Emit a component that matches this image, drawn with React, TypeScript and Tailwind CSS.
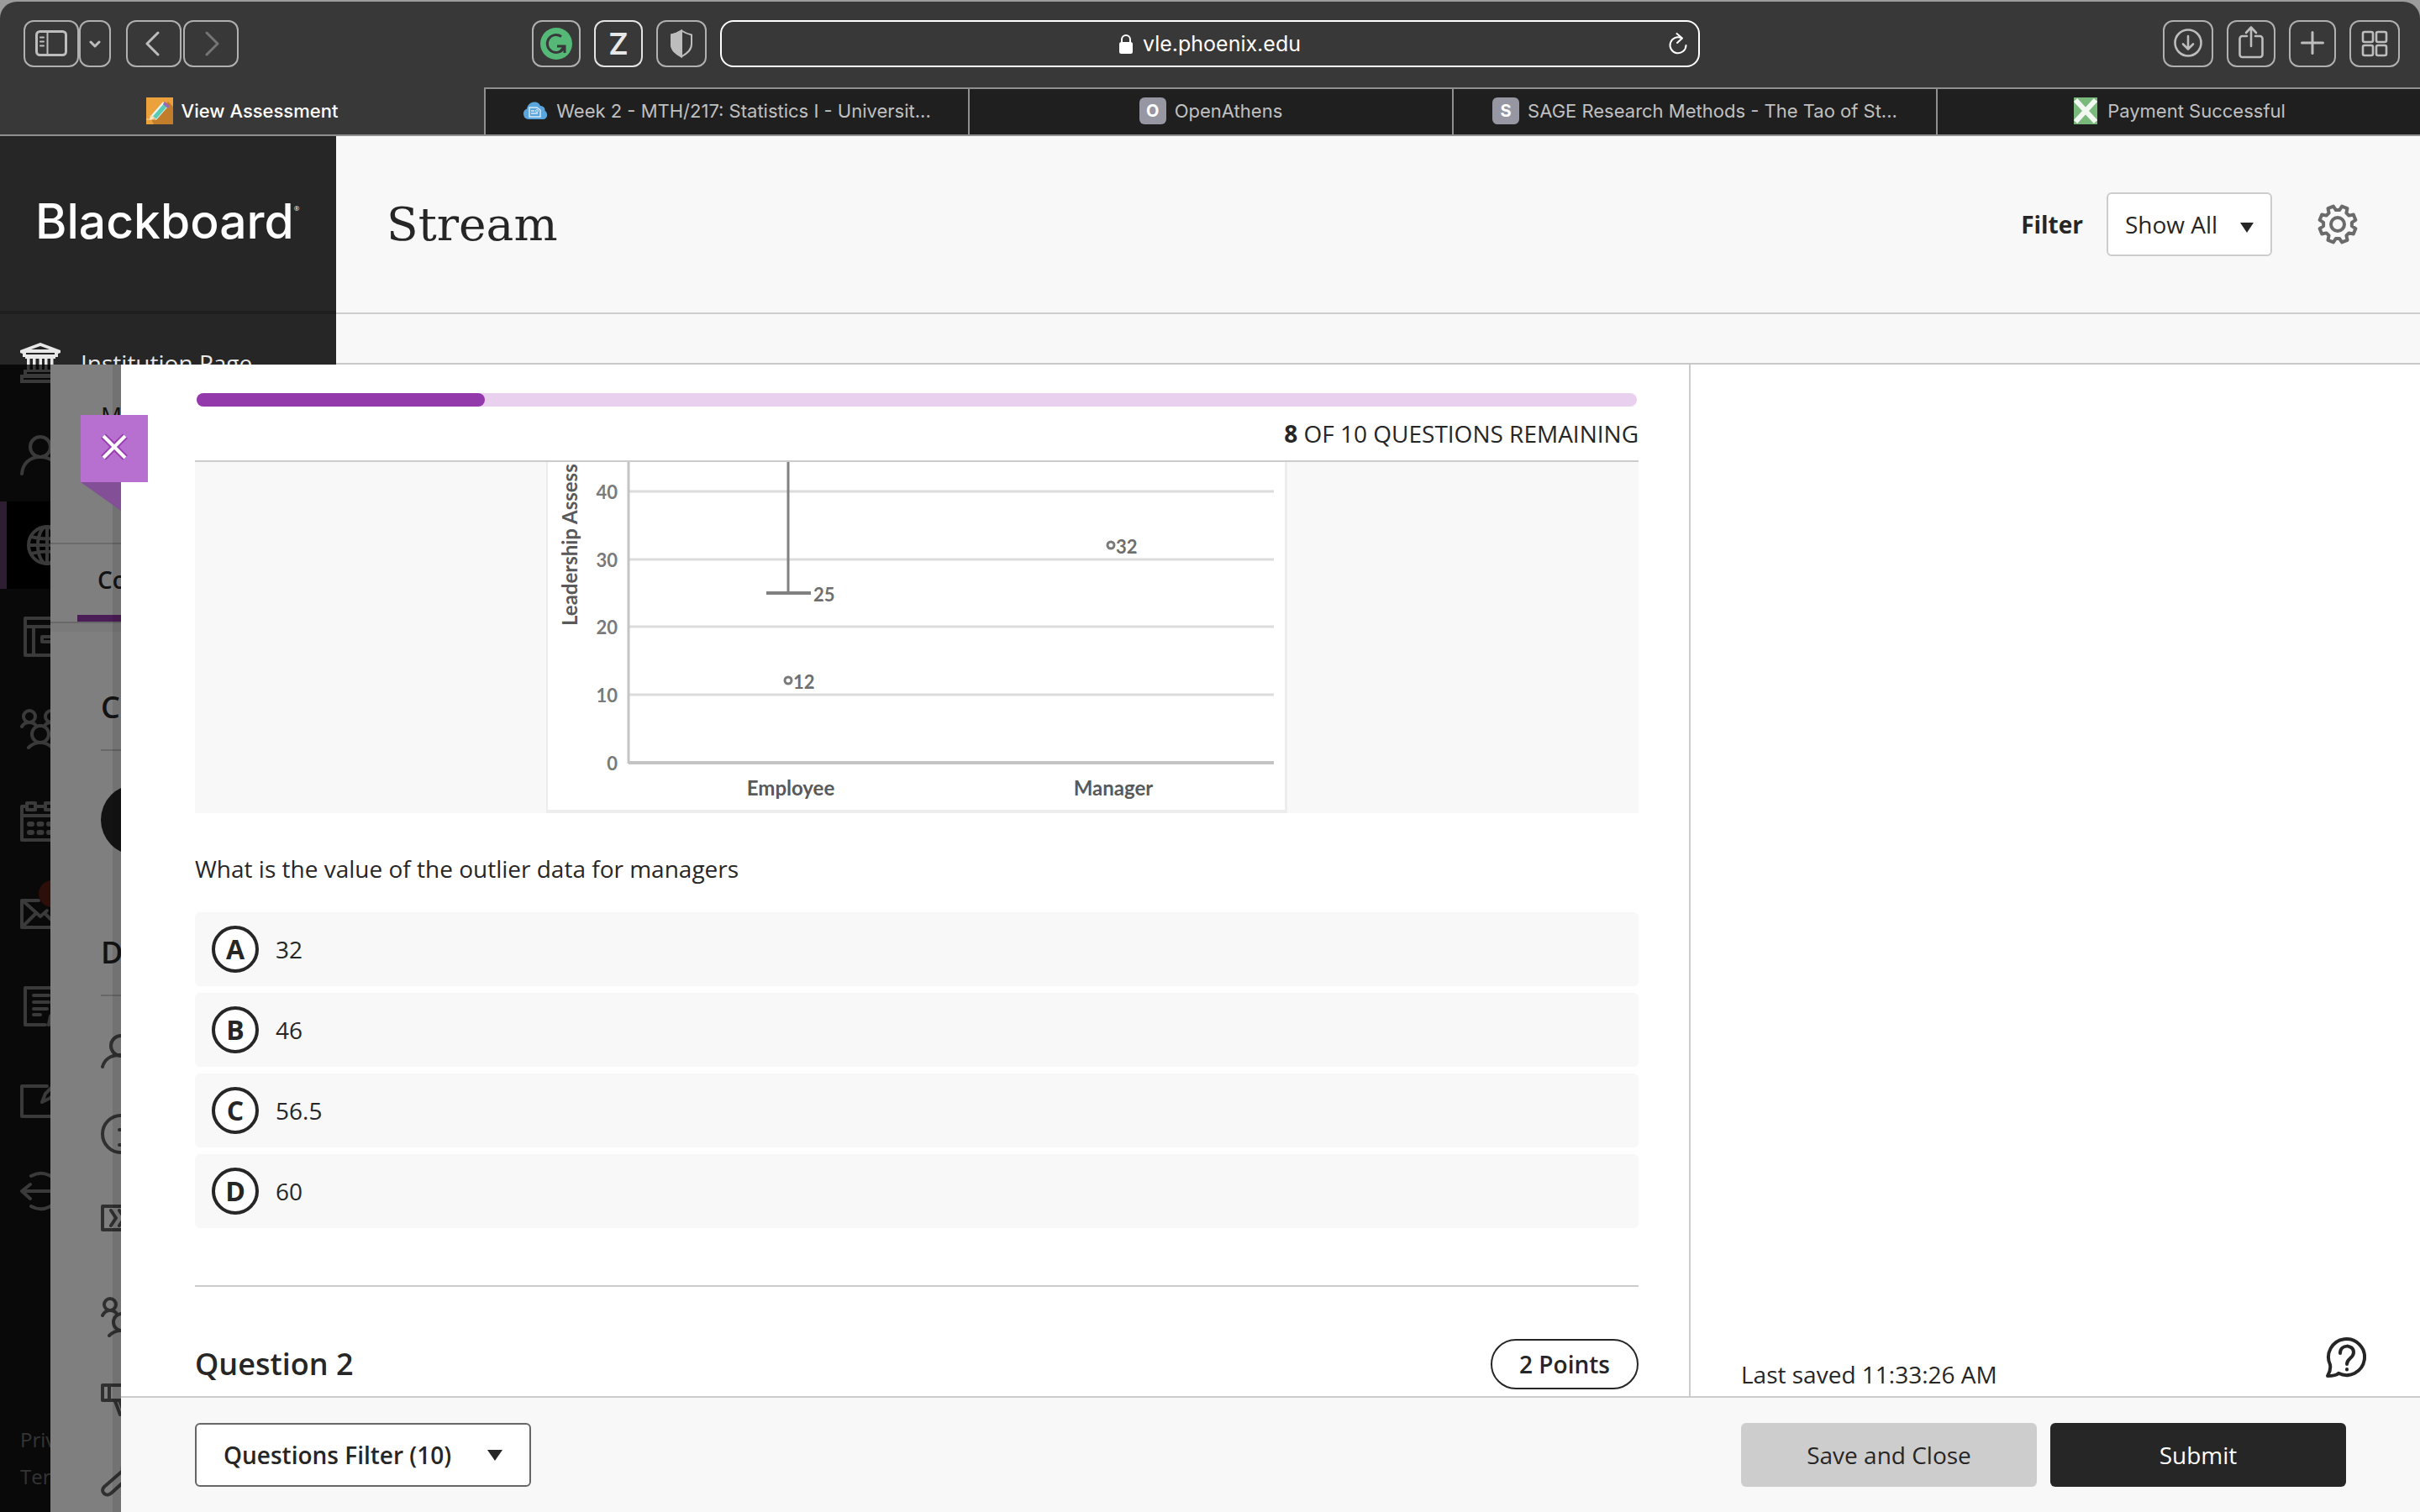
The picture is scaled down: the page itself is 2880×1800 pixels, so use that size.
import type { ReactNode } from "react";

const navIcon = "h-12 w-12 shrink-0 fill-none stroke-current stroke-[4]";

function Icon({ children, className = navIcon }: { children: ReactNode; className?: string }) {
  return (
    <svg viewBox="0 0 48 48" className={className} strokeLinecap="round" strokeLinejoin="round" aria-hidden="true">
      {children}
    </svg>
  );
}

/* ---------- browser chrome ---------- */

function ToolButton({ label, className, children }: { label: string; className: string; children: ReactNode }) {
  return (
    <button
      type="button"
      aria-label={label}
      className={`flex h-14 items-center justify-center rounded-xl border-2 text-[#bdbdbd] ${className}`}
    >
      {children}
    </button>
  );
}

function Toolbar() {
  return (
    <div className="flex h-[102px] items-start pt-[22px]">
      <div className="flex flex-1 items-center pr-4 pl-7">
        <ToolButton label="Sidebar" className="w-[66px] border-[#b0b0b0]">
          <svg viewBox="0 0 38 32" className="h-8 w-[38px] fill-none stroke-current stroke-3" strokeLinecap="round">
            <rect x="1.5" y="1.5" width="35" height="28" rx="4" />
            <path d="M14.5 2v28" strokeWidth="2" />
            <path d="M6 8.500h4M6 13.500h4M6 18.500h4" strokeWidth="2" />
          </svg>
        </ToolButton>
        <ToolButton label="Tab groups" className="w-[38px] border-[#b0b0b0]">
          <svg viewBox="0 0 14 9" className="h-[9px] w-3.5 fill-none stroke-current stroke-3" strokeLinecap="round" strokeLinejoin="round">
            <path d="M2 2l5 5 5-5" />
          </svg>
        </ToolButton>
        <ToolButton label="Back" className="ml-[18px] w-[66px] border-[#b0b0b0]">
          <svg viewBox="0 0 18 30" className="mr-1 h-[30px] w-[18px] fill-none stroke-current stroke-3" strokeLinecap="round" strokeLinejoin="round">
            <path d="M16 2L3 15l13 13" />
          </svg>
        </ToolButton>
        <ToolButton label="Forward" className="ml-0.5 w-[66px] border-[#b0b0b0]">
          <svg viewBox="0 0 18 30" className="ml-1 h-[30px] w-[18px] fill-none stroke-[#757575] stroke-3" strokeLinecap="round" strokeLinejoin="round">
            <path d="M2 2l13 13L2 28" />
          </svg>
        </ToolButton>
        <div className="ml-auto flex gap-4">
          <ToolButton label="Writing assistant" className="w-[58px] border-[#b0b0b0]">
            <svg viewBox="0 0 38 38" className="h-[38px] w-[38px] fill-none">
              <circle cx="19" cy="19" r="19" fill="#55b877" />
              <path d="M25 10.500A10.500 10.500 0 1 0 28 24" stroke="#38383a" strokeWidth="3" />
              <path d="M20 22h9v8M29 22l-5 6" stroke="#38383a" strokeWidth="3" />
            </svg>
          </ToolButton>
          <ToolButton label="Zotero" className="w-[58px] border-[#e4e4e4]">
            <span className="text-[36px] leading-10 font-semibold text-[#e8e8e8]">Z</span>
          </ToolButton>
          <ToolButton label="Privacy report" className="w-[60px] border-[#b0b0b0]">
            <svg viewBox="0 0 28 34" className="h-[34px] w-7 fill-none stroke-current stroke-2">
              <path d="M14 1.500c4 2.500 8 4 12 5v11c0 7-5 11-12 15-7-4-12-8-12-15v-11c4-1 8-2.500 12-5z" />
              <path d="M14 1.500v31c-7-4-12-8-12-15v-11c4-1 8-2.500 12-5z" className="fill-current" />
            </svg>
          </ToolButton>
        </div>
      </div>

      <div className="flex h-14 w-[1166px] items-center rounded-2xl border-2 border-white pr-3 pl-3 text-white">
        <div className="flex flex-1 items-center justify-center gap-3 pl-6">
          <svg viewBox="0 0 16 24" className="h-6 w-4">
            <rect y="10" width="16" height="14" rx="2.500" fill="currentColor" />
            <path d="M3 11V7a5 5 0 0 1 10 0v4" fill="none" stroke="currentColor" strokeWidth="2" />
          </svg>
          <input
            aria-label="Address"
            defaultValue="vle.phoenix.edu"
            className="field-sizing-content bg-transparent text-[25px] leading-8 outline-none"
          />
        </div>
        <button type="button" aria-label="Reload">
          <svg viewBox="0 0 24 28" className="h-7 w-6 fill-none stroke-current stroke-2" strokeLinecap="round" strokeLinejoin="round">
            <path d="M16 7.200A9.500 9.500 0 1 0 21.500 16" />
            <path d="M10.500 2l6.500 5.500-6 5.500" />
          </svg>
        </button>
      </div>

      <div className="flex flex-1 justify-end gap-4 pr-6 pl-5">
        <ToolButton label="Downloads" className="w-[60px] border-[#b0b0b0]">
          <svg viewBox="0 0 36 36" className="h-9 w-9 fill-none stroke-current" strokeWidth="2.600" strokeLinecap="round" strokeLinejoin="round">
            <circle cx="18" cy="17" r="15.500" />
            <path d="M18 9v15M12 18.500l6 6 6-6" />
          </svg>
        </ToolButton>
        <ToolButton label="Share" className="w-[58px] border-[#b0b0b0]">
          <svg viewBox="0 0 30 40" className="mb-1 h-10 w-[30px] fill-none stroke-current" strokeWidth="2.600" strokeLinecap="round" strokeLinejoin="round">
            <path d="M10 13H4.500A3 3 0 0 0 1.500 16v19a3 3 0 0 0 3 3h21a3 3 0 0 0 3-3V16a3 3 0 0 0-3-3H20" />
            <path d="M15 25V3M9 9l6-6.500L21 9" />
          </svg>
        </ToolButton>
        <ToolButton label="New tab" className="w-14 border-[#b0b0b0]">
          <svg viewBox="0 0 28 28" className="mb-0.5 h-7 w-7 fill-none stroke-current stroke-3" strokeLinecap="round">
            <path d="M14 1.500v25M1.500 14h25" />
          </svg>
        </ToolButton>
        <ToolButton label="Tab overview" className="w-[60px] border-[#b0b0b0]">
          <svg viewBox="0 0 32 32" className="h-8 w-8 fill-none stroke-current" strokeWidth="2.600">
            <rect x="2" y="2" width="12" height="12" rx="2" />
            <rect x="18" y="2" width="12" height="12" rx="2" />
            <rect x="2" y="18" width="12" height="12" rx="2" />
            <rect x="18" y="18" width="12" height="12" rx="2" />
          </svg>
        </ToolButton>
      </div>
    </div>
  );
}

function LetterBadge({ letter }: { letter: string }) {
  return (
    <span className="flex h-8 w-8 items-center justify-center rounded-md bg-[#9797a3] text-[20px] leading-8 font-bold text-white">
      {letter}
    </span>
  );
}

function TabBar() {
  const tabs = [
    {
      title: "Week 2 - MTH/217: Statistics I - Universit...",
      icon: (
        <svg viewBox="0 0 30 22" className="h-[22px] w-[30px]">
          <path d="M7 21a6.500 6.500 0 0 1-2-12.500C6 3 10 .5 14 .5c4 0 6 2 7 4.500 4 0 6 3 5.500 6 4 2 3.500 10-2 10z" fill="#5aa5dc" />
          <path d="M8 7h9l4 3v8H8z" fill="none" stroke="#d5eaf8" strokeWidth="1.500" />
          <path d="M10 11h4M10 14h8" stroke="#d5eaf8" strokeWidth="1.500" />
          <circle cx="17" cy="11" r="1.500" fill="none" stroke="#d5eaf8" />
        </svg>
      ),
    },
    { title: "OpenAthens", icon: <LetterBadge letter="O" /> },
    { title: "SAGE Research Methods - The Tao of St...", icon: <LetterBadge letter="S" /> },
    {
      title: "Payment Successful",
      icon: (
        <svg viewBox="0 0 32 32" className="h-8 w-8">
          <rect x="2" width="28" height="32" fill="#7ab97c" />
          <path d="M4 3l24 26M28 3L4 29" stroke="#f2f7f2" strokeWidth="6" />
        </svg>
      ),
    },
  ];
  return (
    <div className="grid h-14 grid-cols-5 text-[22px] leading-8">
      <button type="button" className="flex items-center justify-center gap-2.5 font-medium text-white">
        <svg viewBox="0 0 32 32" className="h-8 w-8">
          <rect width="32" height="32" fill="#eba13c" />
          <path d="M6 26L26 5l6 6v21H9z" fill="#c27d2b" />
          <path d="M0 26h12" stroke="#f8d9a6" strokeWidth="1" />
          <path d="M9 24L23 8" stroke="#eaf6f0" strokeWidth="8" />
          <path d="M10 24L23 9" stroke="#59cbb4" strokeWidth="5" />
          <path d="M22 5l6 5-2 3-6-5z" fill="#9b66b8" />
          <path d="M5 21l-1 6 6-2z" fill="#fbe7c0" />
        </svg>
        View Assessment
      </button>
      {tabs.map((tab) => (
        <button
          key={tab.title}
          type="button"
          className="flex items-center justify-center gap-2.5 border-t-2 border-l-2 border-[#8f8f8f] bg-[#1f1f1f] pb-0.5 whitespace-nowrap text-[#c0c0c0]"
        >
          {tab.icon}
          {tab.title}
        </button>
      ))}
    </div>
  );
}

/* ---------- icons shared by the side menus ---------- */

function BankIcon() {
  return (
    <svg viewBox="0 0 48 48" className="h-12 w-12 shrink-0" fill="currentColor" aria-hidden="true">
      <path fillRule="evenodd" d="M24 0l24 9v3l-3 1v4h-3v2H6v-2H3v-4l-3-1V9zM24 4L13 8h22zM7 12v2h34v-2z" />
      <path d="M8 18h3.500v14H8zM15 18h3.500v14H15zM22.500 18H26v14h-3.500zM29 18h3.500v14H29zM36 18h3.500v14H36z" />
      <path fillRule="evenodd" d="M6 32h36v6h6v10H0V38h4v-6zM8 35v2h32v-2zM4 42v2h40v-2z" />
    </svg>
  );
}

function PeopleIcon() {
  return (
    <Icon>
      <circle cx="11" cy="9" r="7" />
      <path d="M2 21c2-4 5-5 9-5 3 0 6 1 8 4" />
      <circle cx="37" cy="9" r="7" />
      <path d="M46 21c-2-4-5-5-9-5-3 0-6 1-8 4" />
      <circle cx="24" cy="30" r="10" />
      <path d="M10 46c4-4 9-6 14-6s10 2 14 6" />
    </Icon>
  );
}

function PersonIcon() {
  return (
    <Icon>
      <circle cx="24" cy="14" r="12" />
      <path d="M2 46c1-12 9-20 22-20s21 8 22 20" />
    </Icon>
  );
}

function Sidebar() {
  const row = "flex h-[110px] shrink-0 items-center gap-6 pl-6";
  return (
    <nav aria-label="Main" className="flex w-[400px] shrink-0 flex-col bg-[#262626] text-[#e8e8e8]">
      <div className="flex h-[212px] shrink-0 items-center border-b-4 border-[#1e1e1e] pb-1 pl-[42px]">
        <div className="flex items-start text-white">
          <span className="font-[Inter] text-[57px] leading-[64px] font-medium">Blackboard</span>
          <span className="pt-2 text-[8px] leading-4">®</span>
        </div>
      </div>
      <a href="#institution" className={`${row} mt-[3px] text-[28px] leading-10`}>
        <BankIcon />
        Institution Page
      </a>
      <a href="#profile" aria-label="Profile" className={row}>
        <PersonIcon />
      </a>
      <a href="#courses" aria-label="Courses" className="mb-0.5 flex h-[104px] shrink-0 items-center border-l-8 border-[#b878c8] bg-black pl-6">
        <Icon>
          <circle cx="24" cy="24" r="22" />
          <ellipse cx="24" cy="24" rx="11" ry="22" />
          <path d="M24 2v44M2 24h44M5 14q19 5 38 0M5 34q19-5 38 0" />
        </Icon>
      </a>
      <a href="#organizations" aria-label="Organizations" className={row}>
        <Icon>
          <path d="M6 2h38v44H6zM6 12h38M16 12v34M26 24h14v6H26z" />
        </Icon>
      </a>
      <a href="#groups" aria-label="Groups" className={row}>
        <PeopleIcon />
      </a>
      <a href="#calendar" aria-label="Calendar" className={row}>
        <Icon>
          <path d="M8 6H2v40h44V6h-6M19 6h10M2 17h44" />
          <rect x="8" y="2" width="10" height="8" />
          <rect x="30" y="2" width="10" height="8" />
          <path d="M11 27h3M22.500 27h3M34 27h3M11 37h3M22.500 37h3M34 37h3" strokeWidth="6" />
        </Icon>
      </a>
      <a href="#messages" aria-label="Messages" className={`${row} relative`}>
        <Icon>
          <path d="M22 8H2v32h44V18M4 9l20 18 8-7M4 38l15-15M44 38L29 23" />
        </Icon>
        <span className="absolute top-[15px] left-[46px] h-8 w-8 rounded-full bg-[#b83820]" />
      </a>
      <a href="#grades" aria-label="Grades" className={row}>
        <Icon>
          <path d="M30 46H6V2h38v22M16 11h18M16 19h18M16 27h16M16 34h8M34 46l2-10 8-10" />
        </Icon>
      </a>
      <a href="#tools" aria-label="Tools" className={row}>
        <Icon>
          <path d="M32 9H2v36h44V27M26 28l4-10L44 4l4 4-12 15-10 5z" />
        </Icon>
      </a>
      <a href="#signout" aria-label="Sign out" className={row}>
        <Icon>
          <path d="M13 6c14-8 33 0 33 18S27 50 13 42M35 24H2M12 16l-10 8 10 9" />
        </Icon>
      </a>
      <div className="mt-auto flex flex-col pb-5 pl-6 text-[24px] leading-11 text-[#d0d0d0]">
        <a href="#privacy">Priv</a>
        <a href="#terms">Ter</a>
      </div>
    </nav>
  );
}

/* ---------- stream page behind the panels ---------- */

function gearPath(teeth: number, outer: number, inner: number) {
  const step = (Math.PI * 2) / teeth;
  const points: string[] = [];
  for (let i = 0; i < teeth; i++) {
    const a = i * step + step / 2;
    const corners: [number, number][] = [
      [inner, -0.34],
      [outer, -0.2],
      [outer, 0.2],
      [inner, 0.34],
    ];
    for (const [r, t] of corners) {
      const x = 24 + r * Math.cos(a + t * step);
      const y = 24 + r * Math.sin(a + t * step);
      points.push(`${x.toFixed(1)} ${y.toFixed(1)}`);
    }
  }
  return `M${points.join("L")}Z`;
}

function StreamHeader() {
  return (
    <header className="flex h-[212px] items-center border-b-2 border-[#cdcdcd] pr-[74px] pl-[60px] text-[28px] leading-10">
      <h1 className="font-['DejaVu_Serif'] text-[55px] leading-[64px]">Stream</h1>
      <label htmlFor="stream-filter" className="ml-auto font-bold">
        Filter
      </label>
      <div className="relative ml-7">
        <select
          id="stream-filter"
          className="h-[76px] w-[197px] appearance-none rounded-md border-2 border-[#cccccc] bg-white pl-5"
        >
          <option>Show All</option>
        </select>
        <svg viewBox="0 0 16 12" className="pointer-events-none absolute top-9 right-[22px] h-3 w-4" aria-hidden="true">
          <path d="M0 0h16L8 12z" fill="#262626" />
        </svg>
      </div>
      <button type="button" aria-label="Settings" className="ml-[54px] text-[#6b6b6b]">
        <Icon className="h-12 w-12 fill-none stroke-current">
          <path d={gearPath(8, 22, 17)} strokeWidth="4" />
          <circle cx="24" cy="24" r="8" strokeWidth="4" />
        </Icon>
      </button>
    </header>
  );
}

/* ---------- course panel, mostly hidden by the assessment ---------- */

function CoursePeek() {
  return (
    <div className="flex w-[84px] shrink-0 flex-col overflow-hidden bg-white whitespace-nowrap text-[#262626]">
      <div className="h-[214px] shrink-0 border-b-2 border-[#d4d4d4] pt-11 pl-[60px] text-[28px] leading-8">M</div>
      <div className="flex h-[94px] shrink-0 flex-col border-b-2 border-[#d0d0d0] pl-8">
        <span className="flex-1 pt-[22px] pl-6 text-[28px] leading-10 font-semibold">Co</span>
        <span className="h-2 bg-[#983cb0]" />
      </div>
      <div className="h-2.5 shrink-0 bg-[#f4f4f4]" />
      <div className="flex shrink-0 flex-col pl-[60px]">
        <h3 className="mt-[66px] text-[36px] leading-[48px] font-semibold">C</h3>
        <div className="mt-[26px] border-b-2 border-[#d0d0d0]" />
        <div className="mt-10 h-[84px] w-[84px] rounded-full bg-[#262626]" />
        <h3 className="mt-[92px] text-[36px] leading-[48px] font-semibold">D</h3>
        <div className="mt-[26px] border-b-2 border-[#d0d0d0]" />
        <div className="flex flex-col text-[#606060]">
          <div className="mt-9 flex h-[60px] items-center">
            <Icon>
              <circle cx="24" cy="17" r="12" />
              <path d="M2 42c2-8 9-14 20-14s17 5 19 14" />
            </Icon>
          </div>
          <div className="mt-[38px] flex h-[60px] items-center">
            <Icon>
              <circle cx="24" cy="24" r="22" />
              <path d="M22 19h5v18M22 37h8M27 12v1" />
            </Icon>
          </div>
          <div className="mt-10 flex h-[60px] items-center">
            <Icon>
              <path d="M2 10h44v28H2zM12 15l6 9-6 9M22 15l6 9-6 9" />
            </Icon>
          </div>
          <div className="mt-[58px] flex h-[60px] items-center">
            <Icon>
              <circle cx="11" cy="9" r="7" />
              <path d="M2 22c2-4 5-6 9-6 3 0 6 1 8 4" />
              <circle cx="25" cy="30" r="10" />
              <path d="M10 46c4-4 9-6 14-6s10 2 14 6" />
            </Icon>
          </div>
          <div className="mt-[38px] flex h-[60px] items-center">
            <Icon>
              <path d="M2 7h44v18H2zM10 7v18M17 26l6 16h4M23 27l5 14" />
            </Icon>
          </div>
          <div className="mt-8 flex h-[60px] items-center">
            <Icon>
              <path d="M4 44c-3-2-2-6 0-8l22-19C24 6 34 0 42 3M4 44c3 3 7 1 9-1l22-20" />
            </Icon>
          </div>
        </div>
      </div>
    </div>
  );
}

/* ---------- assessment panel ---------- */

function BoxPlot() {
  const ticks = [
    { value: 40, y: 35 },
    { value: 30, y: 116 },
    { value: 20, y: 196 },
    { value: 10, y: 277 },
    { value: 0, y: 358 },
  ];
  return (
    <svg viewBox="0 0 882 418" className="h-[418px] w-[882px] font-[Lato] text-[22px]" role="img" aria-label="Box plot">
      <rect width="882" height="418" fill="#ededed" />
      <rect x="2" width="877" height="414" fill="#ffffff" />
      {ticks.map((tick) => (
        <g key={tick.value}>
          <path d={`M98 ${tick.y}H866`} stroke={tick.value ? "#dcdcdc" : "#c4c4c4"} strokeWidth={tick.value ? 3 : 4} />
          <text x="85" y={tick.y + 9} textAnchor="end" fill="#7a7a7a" className="font-bold">
            {tick.value}
          </text>
        </g>
      ))}
      <path d="M98 0V359" stroke="#c4c4c4" strokeWidth="3" />
      <path d="M288 0V156" stroke="#808080" strokeWidth="3" />
      <path d="M262 156H315" stroke="#808080" strokeWidth="4" />
      <g fill="#6e6e6e" className="font-bold">
        <text x="318" y="166">25</text>
        <text x="294" y="270">12</text>
        <text x="678" y="109">32</text>
      </g>
      <g fill="none" stroke="#7a7a7a" strokeWidth="3">
        <circle cx="288" cy="260" r="4" />
        <circle cx="672" cy="99" r="4" />
      </g>
      <g fill="#595959" className="text-[24px] font-bold">
        <text x="291" y="397" textAnchor="middle">Employee</text>
        <text x="675" y="397" textAnchor="middle">Manager</text>
        <text transform="translate(37 195) rotate(-90)">Leadership Assess</text>
      </g>
    </svg>
  );
}

function Assessment() {
  const options = [
    { letter: "A", text: "32" },
    { letter: "B", text: "46" },
    { letter: "C", text: "56.5" },
    { letter: "D", text: "60" },
  ];
  return (
    <section aria-label="Assessment" className="relative flex min-w-0 flex-1 flex-col bg-white">
      <div className="absolute top-[60px] -left-12 flex flex-col">
        <button type="button" aria-label="Close" className="flex h-20 w-20 items-center justify-center bg-[#b770cf] pb-1">
          <svg viewBox="0 0 36 36" className="h-9 w-9">
            <path d="M5 5l26 26M31 5L5 31" stroke="#983cb0" strokeWidth="8" />
            <path d="M5 5l26 26M31 5L5 31" stroke="#ffffff" strokeWidth="4" />
          </svg>
        </button>
        <svg viewBox="0 0 48 34" className="h-[34px] w-12">
          <path d="M0 0h48v34z" fill="#834f96" />
        </svg>
      </div>

      <div className="flex min-h-0 flex-1">
        <div className="flex min-w-0 flex-1 flex-col overflow-hidden pt-[34px] pr-[60px] pl-[88px] text-[28px] leading-10">
          <div className="mx-0.5 h-4 shrink-0 rounded-full bg-[#e8d0ee]">
            <div className="h-4 w-1/5 rounded-full bg-[#9439ac]" />
          </div>
          <p className="mt-3 shrink-0 border-b-2 border-[#cccccc] pb-3 text-right">
            <b>8</b> OF 10 QUESTIONS REMAINING
          </p>
          <div className="flex shrink-0 justify-center bg-[#f8f8f8]">
            <BoxPlot />
          </div>
          <fieldset className="mt-[46px] shrink-0">
            <legend>What is the value of the outlier data for managers</legend>
            <div className="mt-8 flex flex-col gap-2">
              {options.map((option) => (
                <label key={option.letter} className="flex h-[88px] items-center gap-5 rounded-md bg-[#f8f8f8] pl-5 font-medium">
                  <input type="radio" name="question-1" value={option.text} className="sr-only" />
                  <span className="flex h-14 w-14 items-center justify-center rounded-full border-4 border-[#262626] bg-white text-[32px] font-bold">
                    {option.letter}
                  </span>
                  {option.text}
                </label>
              ))}
            </div>
          </fieldset>
          <hr className="mt-[68px] shrink-0 border-t-2 border-[#cccccc]" />
          <div className="mt-[62px] flex shrink-0 items-center justify-between">
            <h2 className="text-[36px] font-semibold">Question 2</h2>
            <span className="flex h-[60px] w-44 items-center justify-center rounded-full border-2 border-[#262626] font-semibold">
              2 Points
            </span>
          </div>
        </div>

        <aside className="flex w-[870px] shrink-0 items-end justify-between border-l-2 border-[#cccccc] pr-16 pl-[60px] text-[28px] leading-10">
          <p className="pb-1.5">Last saved 11:33:26 AM</p>
          <button type="button" aria-label="Help" className="pb-[22px]">
            <Icon className="h-12 w-12 fill-none stroke-[#262626] stroke-[4]">
              <path d="M2 46c3-5 4-8 3-13.500A21.500 21.500 0 1 1 15 42.800c-3 3-8 3.200-13 3.200z" />
              <path d="M17 19c0-11 16-11 16-1 0 7-8 7-8 14M25 38v.5" />
            </Icon>
          </button>
        </aside>
      </div>

      <footer className="flex h-[138px] shrink-0 items-center border-t-2 border-[#cccccc] bg-[#f8f8f8] px-[88px] text-[28px] leading-10">
        <button
          type="button"
          aria-haspopup="true"
          className="flex h-[76px] w-[400px] items-center justify-between rounded-md border-2 border-[#666666] bg-white px-8 font-semibold"
        >
          Questions Filter (10)
          <svg viewBox="0 0 18 13" className="h-[13px] w-[18px]" aria-hidden="true">
            <path d="M0 0h18L9 13z" fill="#262626" />
          </svg>
        </button>
        <div className="ml-auto flex gap-4">
          <button type="button" className="h-[76px] w-[352px] rounded-md bg-[#cdcdcd]">
            Save and Close
          </button>
          <button type="button" className="h-[76px] w-[352px] rounded-md bg-[#262626] text-white">
            Submit
          </button>
        </div>
      </footer>
    </section>
  );
}

export default function App() {
  return (
    <div className="h-screen overflow-hidden bg-[#9c9c9c] pt-0.5 font-['Open_Sans',sans-serif] text-[#262626]">
      <div className="flex h-full flex-col overflow-hidden rounded-t-[20px] bg-[#383838]">
        <div className="shrink-0 font-[Inter,sans-serif]">
          <Toolbar />
          <TabBar />
        </div>
        <div className="relative flex min-h-0 flex-1 overflow-hidden border-t-2 border-[#8f8f8f]">
          <Sidebar />
          <main className="flex-1 bg-[#f8f8f8]">
            <StreamHeader />
            <div className="h-[60px] border-b-2 border-[#c8c8c8]" />
          </main>
          <div className="absolute inset-x-0 top-[272px] bottom-0 flex">
            <div className="w-[60px] shrink-0 bg-black/50" />
            <CoursePeek />
            <div className="absolute inset-y-0 left-0 flex w-36 justify-end bg-black/50">
              <div className="w-2.5 bg-black/10" />
            </div>
            <Assessment />
          </div>
        </div>
      </div>
    </div>
  );
}
